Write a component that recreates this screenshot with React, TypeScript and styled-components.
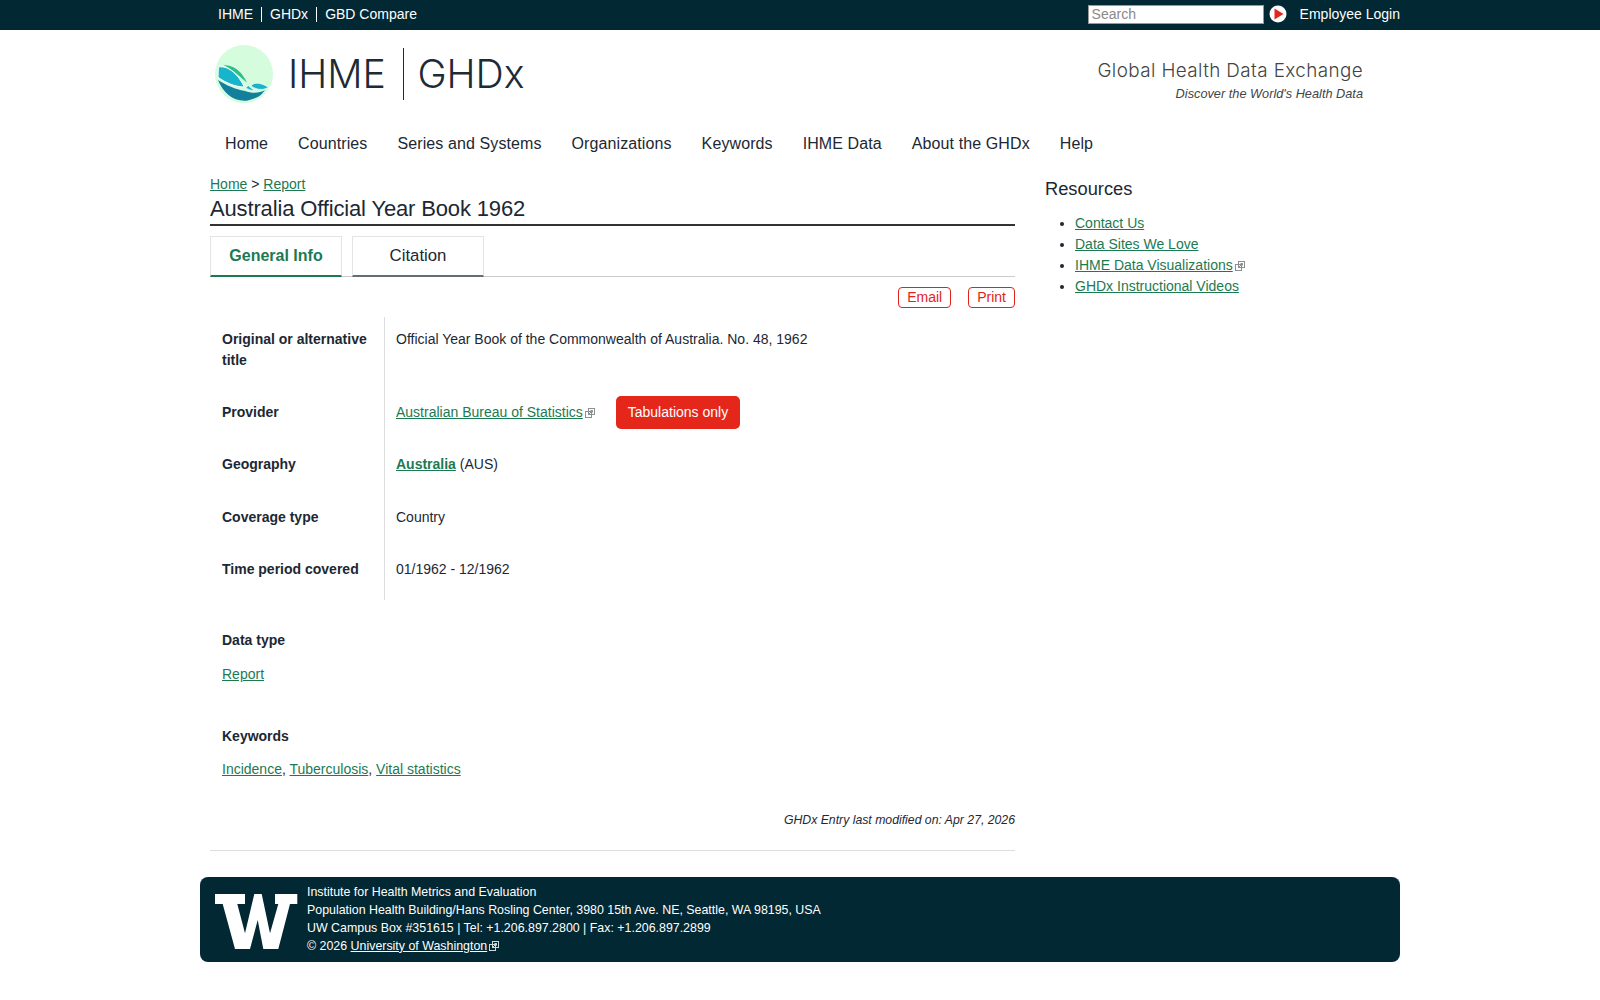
import styled, { createGlobalStyle } from "styled-components";

const GlobalStyle = createGlobalStyle`
  html, body {
    margin: 0;
    padding: 0;
    background: #fff;
    color: #1c2833;
    font-family: "Liberation Sans", Arial, sans-serif;
    font-size: 14px;
  }
  a {
    color: #1c7a52;
  }
`;

const TopBar = styled.div`
  background: #022833;
  height: 30px;
`;

const TopInner = styled.div`
  width: 1200px;
  margin: 0 auto;
  height: 30px;
  padding-bottom: 1px;
  box-sizing: border-box;
  display: flex;
  align-items: center;
  justify-content: space-between;
  color: #fff;
  font-size: 14px;
`;

const TopLinks = styled.div`
  display: flex;
  align-items: center;
  padding-left: 18px;
`;

const TopLink = styled.span<{ $first?: boolean }>`
  line-height: 15px;
  padding: 0 8px;
  border-left: ${(props) => (props.$first ? "none" : "1px solid #fff")};
  padding-left: ${(props) => (props.$first ? "0" : "8px")};
`;

const TopRight = styled.div`
  display: flex;
  align-items: center;
  padding-bottom: 1px;
`;

const SearchBox = styled.input`
  box-sizing: border-box;
  width: 176px;
  height: 19px;
  border: 1px solid #999;
  padding: 0 3px;
  font: 14px "Liberation Sans", Arial, sans-serif;
  background: #fff;
  &::placeholder {
    color: #8a8a8a;
  }
`;

const SearchGo = styled.svg`
  width: 18px;
  height: 18px;
  margin: 0 13px 0 5px;
`;

const Masthead = styled.div`
  width: 1200px;
  margin: 0 auto;
  height: 95px;
  display: flex;
  align-items: center;
  justify-content: space-between;
  padding: 0 37px 0 15px;
  box-sizing: border-box;
`;

const Brand = styled.div`
  display: flex;
  align-items: center;
  margin-bottom: 8px;
  font-family: Inter, sans-serif;
  font-weight: 300;
  font-size: 39.2px;
  color: #1c2b36;
`;

const BrandMark = styled.svg`
  width: 58px;
  height: 58px;
  margin-right: 15px;
`;

const BrandSplit = styled.span`
  width: 1.5px;
  height: 52px;
  background: #1c2b36;
  margin: 0 13px 0 17px;
`;

const Tagline = styled.div`
  text-align: right;
  margin-top: 4px;
`;

const TaglineMain = styled.div`
  font-family: Inter, sans-serif;
  font-weight: 300;
  font-size: 18.85px;
  letter-spacing: 0.4px;
  color: #444;
`;

const TaglineSub = styled.div`
  font-size: 12.75px;
  font-style: italic;
  color: #444;
  margin-top: 4px;
`;

const Nav = styled.nav`
  width: 1200px;
  margin: 0 auto;
  display: flex;
  gap: 30px;
  padding: 9px 0 0 25px;
  box-sizing: border-box;
  font-size: 16px;
  letter-spacing: 0.1px;
  line-height: 20px;
`;

const Columns = styled.div`
  width: 1200px;
  margin: 20px auto 0;
  display: grid;
  grid-template-columns: 805px 1fr;
  gap: 30px;
  padding-left: 10px;
  box-sizing: border-box;
`;

const Main = styled.main`
  min-width: 0;
`;

const Crumbs = styled.div`
  line-height: 20px;
`;

const Title = styled.h1`
  margin: 0;
  font-size: 22px;
  letter-spacing: -0.15px;
  font-weight: 400;
  line-height: 30px;
  border-bottom: 2px solid #333;
`;

const Tabs = styled.div`
  display: flex;
  gap: 10px;
  margin-top: 10px;
  border-bottom: 1px solid #ccc;
`;

const Tab = styled.div<{ $active?: boolean }>`
  box-sizing: border-box;
  width: 132px;
  height: 41px;
  margin-bottom: -1px;
  border: 1px solid #e4e4e4;
  border-bottom: 2px solid ${(props) => (props.$active ? "#1c7a52" : "#666e73")};
  display: flex;
  align-items: center;
  justify-content: center;
  font-size: ${(props) => (props.$active ? "16px" : "16.8px")};
  font-weight: ${(props) => (props.$active ? 700 : 400)};
  color: ${(props) => (props.$active ? "#1c7a52" : "#1c2833")};
`;

const Actions = styled.div`
  display: flex;
  justify-content: flex-end;
  gap: 17px;
  margin-top: 10px;
`;

const ActionButton = styled.span`
  box-sizing: border-box;
  height: 21px;
  padding: 0 8px;
  border: 1px solid #e2231a;
  border-radius: 4px;
  color: #e2231a;
  font-size: 14px;
  line-height: 19px;
`;

const Facts = styled.dl`
  display: grid;
  grid-template-columns: 175px 1fr;
  margin: 9px 0 0;
`;

const FactLabel = styled.dt<{ $tall?: boolean; $last?: boolean }>`
  font-weight: 700;
  padding: 12px 12px ${(props) => (props.$last ? "10px" : "0")};
  height: ${(props) => (props.$tall ? "51px" : "40.5px")};
  line-height: 21px;
  border-right: 1px solid #ddd;
  display: flex;
  align-items: ${(props) => (props.$tall ? "flex-start" : "center")};
`;

const FactValue = styled.dd<{ $mid?: boolean; $last?: boolean }>`
  margin: 0;
  padding: 12px 11px ${(props) => (props.$last ? "10px" : "0")};
  display: flex;
  align-items: ${(props) => (props.$mid ? "center" : "flex-start")};
  line-height: 21px;
`;

const Badge = styled.span`
  background: #e5261b;
  color: #fff;
  border-radius: 5px;
  height: 33px;
  line-height: 33px;
  padding: 0 12px;
  margin-left: 21px;
`;

const BlockLabel = styled.div`
  font-weight: 700;
  padding-left: 12px;
  line-height: 21px;
  margin-top: 30px;
`;

const BlockValue = styled.div`
  padding: 0 0 11px 12px;
  line-height: 21px;
  margin-top: 12.5px;
`;

const Modified = styled.div`
  text-align: right;
  font-size: 12.25px;
  font-style: italic;
  margin-top: 19px;
  line-height: 20px;
`;

const Rule = styled.hr`
  border: none;
  border-top: 1px solid #ddd;
  margin: 20px 0 0;
`;

const Side = styled.aside`
  padding-top: 4px;
`;

const SideTitle = styled.h2`
  margin: 0;
  font-size: 18.3px;
  font-weight: 400;
  line-height: 22px;
`;

const SideList = styled.ul`
  margin: 13px 0 0;
  padding: 0 0 0 30px;
  li {
    line-height: 21px;
  }
`;

const Footer = styled.footer`
  width: 1200px;
  box-sizing: border-box;
  margin: 26px auto 0;
  height: 85px;
  background: #022833;
  border-radius: 8px;
  color: #fff;
  display: flex;
  align-items: center;
  padding: 0 15px 2px;
  font-size: 12.4px;
  line-height: 18px;
  a {
    color: #fff;
  }
`;

const FooterMark = styled.svg`
  width: 83px;
  height: 56px;
  margin: 7px 9px 0 0;
`;

const ExtIcon = styled.svg<{ $light?: boolean }>`
  width: 10px;
  height: 10px;
  margin-left: 2px;
  vertical-align: -1px;
  fill: none;
  stroke: ${(props) => (props.$light ? "#cfd8da" : "#8a8f92")};
  stroke-width: 1;
`;

const External = ({ light }: { light?: boolean }) => (
  <ExtIcon $light={light} viewBox="0 0 10 10">
    <rect x="0.5" y="3.5" width="6" height="6" />
    <rect x="3.5" y="0.5" width="6" height="6" />
    <path d="M4 6 L7.5 2.5 M5.5 2.5 H7.5 V4.5" />
  </ExtIcon>
);

const Logo = () => (
  <BrandMark viewBox="0 0 174 174">
    <circle cx="87" cy="87" r="87" fill="#d4fcdd" />
    <path d="M22 60 C52 56 82 76 99 117 C76 98 50 72 22 60 Z" fill="#2bc287" stroke="#fff" strokeWidth="2" />
    <path d="M10 66 C42 60 72 92 88 126 C60 126 30 112 9 97 Z" fill="#17b4cc" stroke="#fff" strokeWidth="3" />
    <path d="M108 123 C115 112 135 110 160 127 C145 137 125 135 108 123 Z" fill="#17b4cc" stroke="#fff" strokeWidth="2" />
    <path d="M92 128 L100 122 L118 137 C108 137 100 133 92 128 Z" fill="#17b4cc" stroke="#fff" strokeWidth="2" />
    <path d="M9 105 C35 122 60 132 90 138 C110 146 135 145 150 135 C140 150 128 160 95 167 C55 170 25 145 9 105 Z" fill="#127f9c" />
  </BrandMark>
);

export default function App() {
  return (
    <>
      <GlobalStyle />
      <TopBar>
        <TopInner>
          <TopLinks>
            <TopLink $first>IHME</TopLink>
            <TopLink>GHDx</TopLink>
            <TopLink>GBD Compare</TopLink>
          </TopLinks>
          <TopRight>
            <SearchBox placeholder="Search" />
            <SearchGo viewBox="0 0 18 18">
              <circle cx="9" cy="9" r="8.5" fill="#fff" />
              <path d="M5.5 3.5 L14.5 9 L5.5 14.5 Z" fill="#e5261b" />
            </SearchGo>
            <span>Employee Login</span>
          </TopRight>
        </TopInner>
      </TopBar>
      <Masthead>
        <Brand>
          <Logo />
          IHME
          <BrandSplit />
          GHDx
        </Brand>
        <Tagline>
          <TaglineMain>Global Health Data Exchange</TaglineMain>
          <TaglineSub>Discover the World's Health Data</TaglineSub>
        </Tagline>
      </Masthead>
      <Nav>
        <span>Home</span>
        <span>Countries</span>
        <span>Series and Systems</span>
        <span>Organizations</span>
        <span>Keywords</span>
        <span>IHME Data</span>
        <span>About the GHDx</span>
        <span>Help</span>
      </Nav>
      <Columns>
        <Main>
          <Crumbs>
            <a href="#">Home</a> &gt; <a href="#">Report</a>
          </Crumbs>
          <Title>Australia Official Year Book 1962</Title>
          <Tabs>
            <Tab $active>General Info</Tab>
            <Tab>Citation</Tab>
          </Tabs>
          <Actions>
            <ActionButton>Email</ActionButton>
            <ActionButton>Print</ActionButton>
          </Actions>
          <Facts>
            <FactLabel $tall>Original or alternative title</FactLabel>
            <FactValue>Official Year Book of the Commonwealth of Australia. No. 48, 1962</FactValue>
            <FactLabel>Provider</FactLabel>
            <FactValue $mid>
              <span>
                <a href="#">Australian Bureau of Statistics</a>
                <External />
              </span>
              <Badge>Tabulations only</Badge>
            </FactValue>
            <FactLabel>Geography</FactLabel>
            <FactValue $mid>
              <span>
                <a href="#">
                  <b>Australia</b>
                </a>{" "}
                (AUS)
              </span>
            </FactValue>
            <FactLabel>Coverage type</FactLabel>
            <FactValue $mid>Country</FactValue>
            <FactLabel $last>Time period covered</FactLabel>
            <FactValue $mid $last>
              01/1962 - 12/1962
            </FactValue>
          </Facts>
          <BlockLabel>Data type</BlockLabel>
          <BlockValue>
            <a href="#">Report</a>
          </BlockValue>
          <BlockLabel>Keywords</BlockLabel>
          <BlockValue>
            <a href="#">Incidence</a>, <a href="#">Tuberculosis</a>, <a href="#">Vital statistics</a>
          </BlockValue>
          <Modified>GHDx Entry last modified on: Apr 27, 2026</Modified>
          <Rule />
        </Main>
        <Side>
          <SideTitle>Resources</SideTitle>
          <SideList>
            <li>
              <a href="#">Contact Us</a>
            </li>
            <li>
              <a href="#">Data Sites We Love</a>
            </li>
            <li>
              <a href="#">IHME Data Visualizations</a>
              <External />
            </li>
            <li>
              <a href="#">GHDx Instructional Videos</a>
            </li>
          </SideList>
        </Side>
      </Columns>
      <Footer>
        <FooterMark viewBox="0 0 83 56">
          <path
            fill="#fff"
            d="M0 0 H30 V10 H22.3 L30 39.3 L39.3 0 H46.7 L55 39.3 L63.3 10 H60 V0 H82.3 V10 H75 L63.3 55 H48.3 L42.7 26 L35 55 H20 L7.7 10 H0 Z"
          />
        </FooterMark>
        <div>
          <div>Institute for Health Metrics and Evaluation</div>
          <div>Population Health Building/Hans Rosling Center, 3980 15th Ave. NE, Seattle, WA 98195, USA</div>
          <div>UW Campus Box #351615 | Tel: +1.206.897.2800 | Fax: +1.206.897.2899</div>
          <div>
            © 2026 <a href="#">University of Washington</a>
            <External light />
          </div>
        </div>
      </Footer>
    </>
  );
}
